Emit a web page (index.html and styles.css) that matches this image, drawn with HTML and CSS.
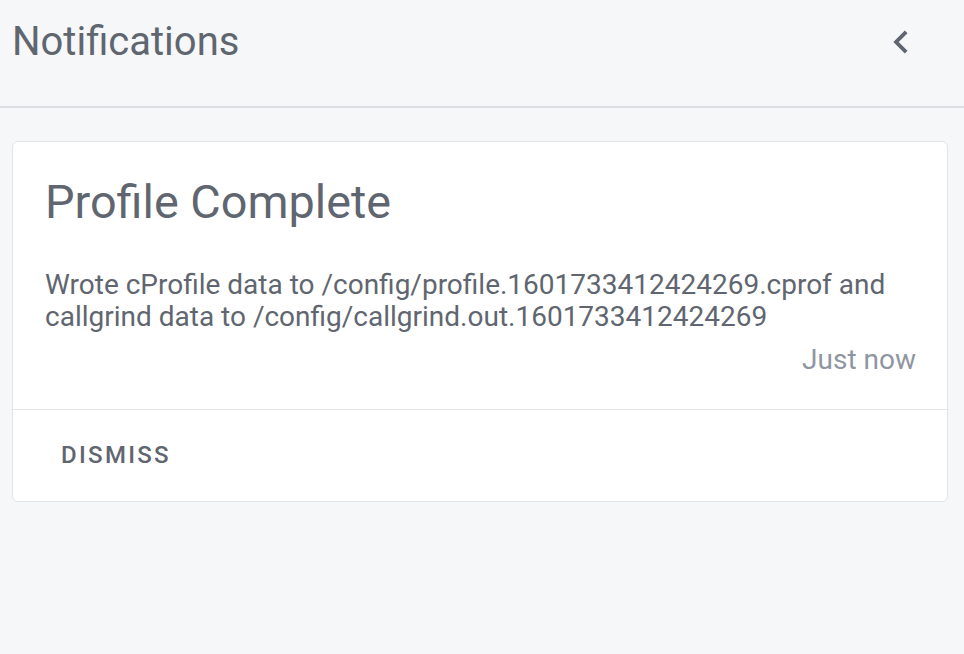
FILE: index.html
```html
<!DOCTYPE html>
<html>
<head>
<meta charset="utf-8">
<link rel="stylesheet" href="styles.css">
</head>
<body>
<div class="panel">
  <header class="header">
    <h1 class="title">Notifications</h1>
    <button class="close" aria-label="Collapse">
      <svg width="46" height="46" viewBox="0 0 24 24"><path d="M15.4 7.4 14 6l-6 6 6 6 1.4-1.4L10.8 12z" fill="#5f6670"/></svg>
    </button>
  </header>
  <div class="list">
    <div class="card">
      <div class="card-body">
        <h2 class="card-title">Profile Complete</h2>
        <p class="card-text">Wrote cProfile data to /config/profile.1601733412424269.cprof and callgrind data to /config/callgrind.out.1601733412424269</p>
        <div class="time">Just now</div>
      </div>
      <div class="card-actions">
        <button class="btn">DISMISS</button>
      </div>
    </div>
  </div>
</div>
</body>
</html>
```
FILE: styles.css
```css
html, body {
  margin: 0;
  padding: 0;
  background: #f6f7f9;
  font-family: Roboto, "Liberation Sans", sans-serif;
  color: #5f6670;
}
.panel {
  width: 964px;
  height: 654px;
}
.header {
  height: 108px;
  border-bottom: 2px solid #dcdee2;
  display: flex;
  align-items: center;
  justify-content: space-between;
  padding: 0 40px 0 12px;
  box-sizing: border-box;
}
.title {
  margin: 0;
  font-size: 40px;
  font-weight: 400;
  line-height: 1;
  margin-top: -22px;
}
.close {
  background: none;
  border: 0;
  padding: 0;
  width: 46px;
  height: 46px;
  margin-top: -22px;
}
.close svg { display: block; }
.list {
  padding: 33px 16px 0 12px;
}
.card {
  background: #fff;
  border: 1.5px solid #e2e4e7;
  border-radius: 6px;
}
.card-body {
  padding: 32px 31px 33px 32px;
}
.card-title {
  margin: 0;
  font-size: 46.8px;
  font-weight: 400;
  line-height: 1.2;
}
.card-text {
  margin: 38.5px 0 0;
  font-size: 28px;
  line-height: 32px;
}
.time {
  text-align: right;
  font-size: 28px;
  line-height: 32px;
  margin-top: 11.5px;
  color: #8f96a1;
}
.card-actions {
  border-top: 1.5px solid #e2e4e7;
  height: 90.5px;
  display: flex;
  align-items: center;
  padding-left: 36px;
}
.btn {
  background: none;
  border: 0;
  padding: 12px;
  font-family: Roboto, "Liberation Sans", sans-serif;
  font-size: 24px;
  font-weight: 500;
  letter-spacing: 2.3px;
  color: #5f6670;
}
```
